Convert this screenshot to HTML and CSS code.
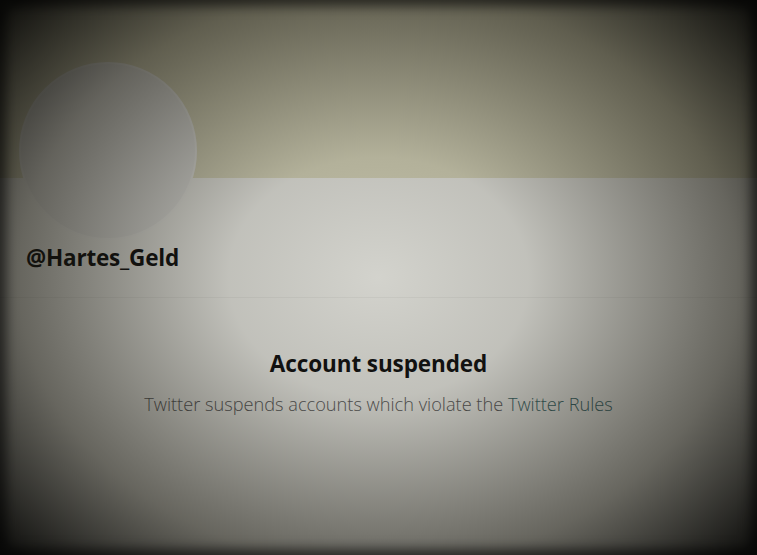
FILE: index.html
```html
<!DOCTYPE html>
<html lang="en">
<head>
    <meta charset="UTF-8">
    <title>@Hartes_Geld</title>
    <link rel="stylesheet" href="styles.css">
</head>
<body>
    <div class="profile">
        <div class="banner"></div>
        <div class="header">
            <div class="avatar"></div>
            <div class="handle">@Hartes_Geld</div>
        </div>
        <div class="suspended">
            <h1>Account suspended</h1>
            <p>Twitter suspends accounts which violate the <a href="#">Twitter Rules</a></p>
        </div>
        <div class="vignette"></div>
    </div>
</body>
</html>
```

FILE: styles.css
```css
* {
    margin: 0;
    padding: 0;
    box-sizing: border-box;
}

body {
    font-family: "Open Sans", "Noto Sans", sans-serif;
    background: #222;
    overflow: hidden;
}

.profile {
    position: relative;
    width: 757px;
    height: 555px;
    background: #d9d9d3;
    overflow: hidden;
}

.banner {
    height: 178px;
    background: #c9c7ae;
}

.header {
    display: flow-root;
    height: 120px;
    padding-left: 19px;
    border-bottom: 1px solid #d0d0ca;
}

.avatar {
    width: 178px;
    height: 178px;
    margin-top: -116px;
    border-radius: 50%;
    background: #d2d2ce;
    border: 2px solid #d8d8d3;
}

.handle {
    margin: 3px 0 0 7px;
    font-size: 22.5px;
    font-weight: 700;
    line-height: 30px;
    color: #111;
    letter-spacing: -0.2px;
}

.suspended {
    text-align: center;
    padding-top: 51px;
}

.suspended h1 {
    font-size: 22.5px;
    font-weight: 700;
    line-height: 30px;
    color: #111;
    letter-spacing: -0.1px;
}

.suspended p {
    margin-top: 13px;
    font-size: 18.2px;
    font-weight: 300;
    line-height: 24px;
    color: #555;
}

.suspended a {
    color: #3a6262;
    text-decoration: none;
}

.vignette {
    position: absolute;
    inset: 0;
    pointer-events: none;
    background: radial-gradient(ellipse 66% 72% at 50% 50%, rgba(20, 18, 10, 0.03) 0%, rgba(20, 18, 10, 0.12) 30%, rgba(20, 18, 10, 0.58) 72%, rgba(8, 8, 6, 0.95) 100%);
    box-shadow: inset 0 0 12px 6px rgba(0, 0, 0, 0.6);
}
```
